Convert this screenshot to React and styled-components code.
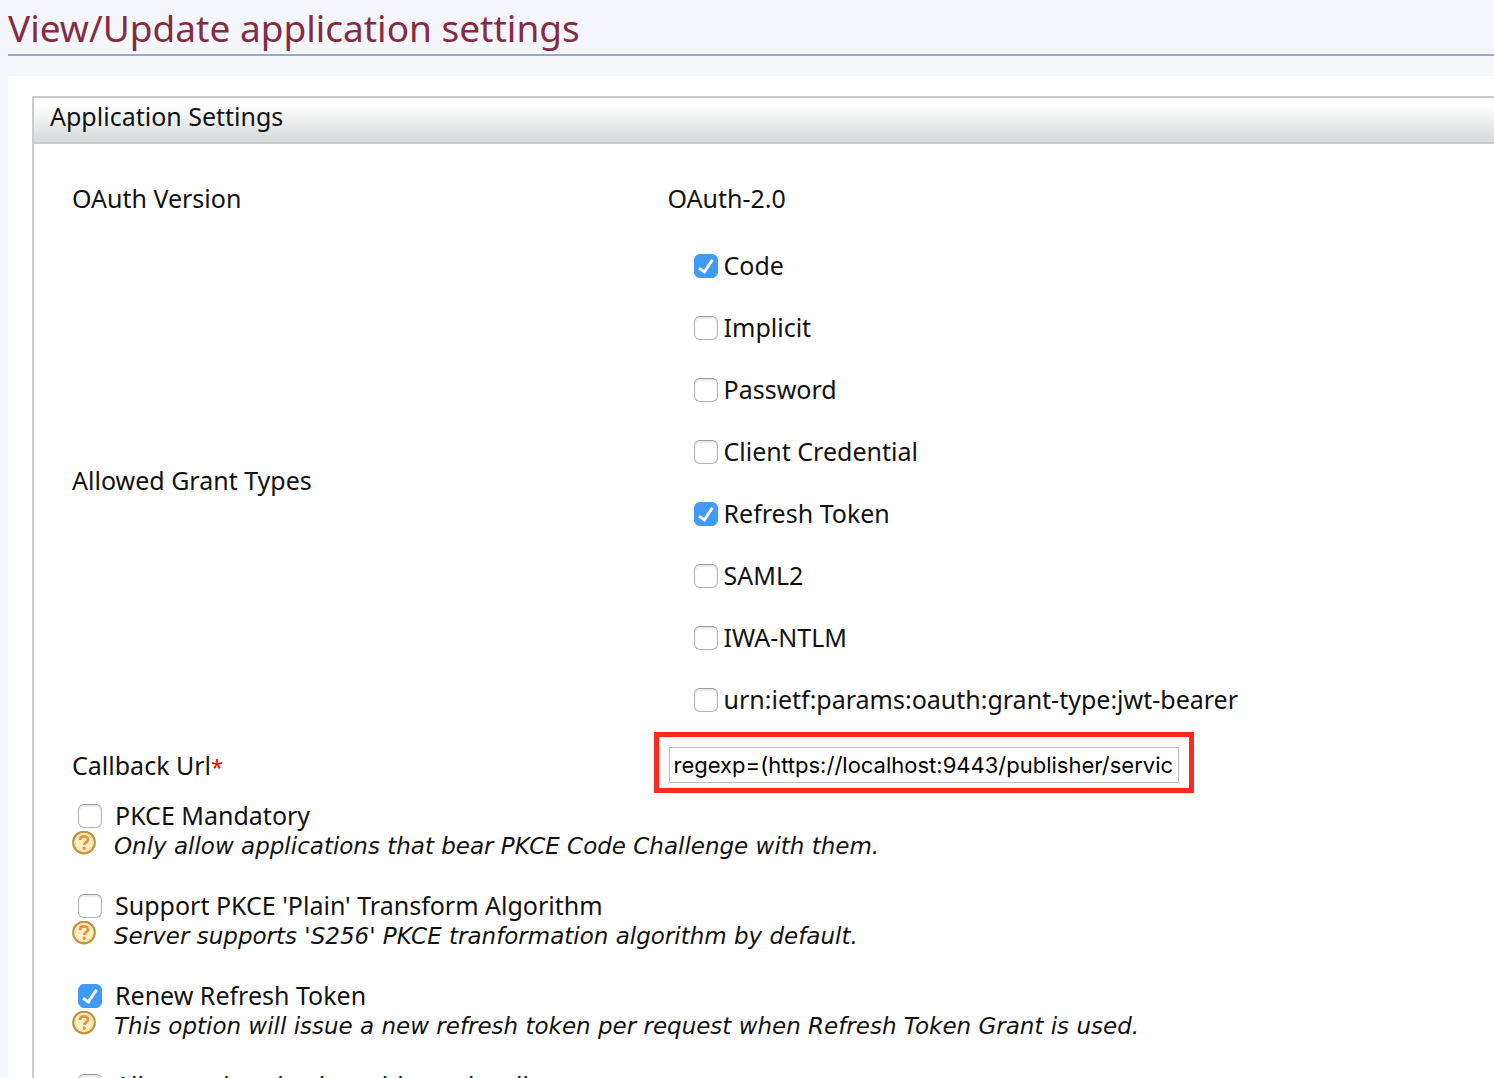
import React, { useId } from 'react';
import styled, { createGlobalStyle } from 'styled-components';

const GlobalStyle = createGlobalStyle`
  *, *::before, *::after { box-sizing: border-box; }
  body {
    margin: 0;
    background: #f4f6fb;
    color: #111;
    font: 25px/30px "Noto Sans", "Open Sans", sans-serif;
  }
  #root { height: 100vh; overflow: hidden; }
`;

const Page = styled.main`
  padding-left: 8px;
`;

const Title = styled.h1`
  margin: 0;
  padding: 5px 0 3px;
  border-bottom: 2px solid #94a9cd;
  color: #852b42;
  font-size: 37px;
  font-weight: 400;
  line-height: 46px;
`;

const WorkArea = styled.section`
  margin-top: 20px;
  padding: 20px 0 0 24px;
  background: #fff;
`;

const Panel = styled.div`
  border: 2px solid #cacbcc;
  border-right: 0;
`;

const PanelHeading = styled.h2`
  margin: 0;
  padding: 3px 16px 11px;
  border-bottom: 2px solid #cacbcc;
  background: linear-gradient(#fff 15%, #f0f3f2 45%, #e1e3e5 75%, #d9dcdd 90%);
  font-size: 25px;
  font-weight: 400;
  line-height: 30px;
`;

const Form = styled.form`
  padding: 29px 4px 30px 38px;
`;

const Fields = styled.div`
  display: grid;
  grid-template-columns: 42% 1fr;
  align-items: center;
`;

const FieldValue = styled.div`
  padding: 10px 0;
`;

const FieldLabel = styled.div`
  padding-top: 4px;
`;

const GrantList = styled.div`
  display: grid;
  row-gap: 34px;
  padding: 28px 0 19px 26px;
`;

const Choice = styled.label`
  display: flex;
  align-items: center;
  gap: ${(p) => p.$gap}px;
  line-height: 28px;
`;

const Tick = styled.input`
  appearance: none;
  flex: none;
  display: grid;
  place-items: center;
  width: 24px;
  height: 24px;
  margin: 2px 0 0;
  border: 1px solid #b2b2b2;
  border-top-color: #999;
  border-radius: 6px;
  background: #fff;
  box-shadow: inset 0 2px 2px #e8e8e8;

  &:checked {
    border-color: #409afa;
    background: #409afa;
    box-shadow: none;
  }

  &:checked::after {
    content: "";
    width: 8px;
    height: 16px;
    margin-bottom: 3px;
    border: solid #fff;
    border-width: 0 3px 3px 0;
    transform: rotate(34deg);
  }
`;

const Required = styled.span`
  color: #f00;
  font-size: 22px;
  line-height: 20px;
`;

const Highlight = styled.div`
  justify-self: start;
  margin-left: -14px;
  padding: 10px 10px 5px;
  border: 5px solid #fc2a1c;
`;

const UrlInput = styled.input`
  display: block;
  width: 510px;
  height: 36px;
  padding: 0 4px;
  border: 1px solid #b9babb;
  border-radius: 0;
  background: #fff;
  color: #000;
  font: 22px/30px Inter, Roboto, sans-serif;
`;

const Options = styled.div`
  display: grid;
  row-gap: 30px;
  padding-top: 8px;
`;

const OptionTop = styled.div`
  padding: 0 0 2px 6px;
`;

const Hint = styled.div`
  display: flex;
  gap: 18px;
  font-family: "DejaVu Sans", sans-serif;
  font-size: 23px;
  font-style: oblique;
`;

const HelpIcon = styled.svg`
  flex: none;
  width: 24px;
  height: 24px;
`;

function Help() {
  return (
    <HelpIcon viewBox="0 0 24 24" aria-hidden="true">
      <circle cx="12" cy="11.5" r="10.8" fill="#fdf0c4" stroke="#bd9444" strokeWidth="2.2" />
      <circle cx="12" cy="11.5" r="8.9" fill="none" stroke="#f7e3a8" strokeWidth="1.4" />
      <path d="M8 8.9C8 4.3 16 4.3 16 8.6C16 11.3 12.2 11.2 12.2 14.1" fill="none" stroke="#e5914c" strokeWidth="2.8" />
      <circle cx="12.2" cy="17.2" r="1.7" fill="#e5914c" />
    </HelpIcon>
  );
}

const grants = [
  ['Code', true],
  ['Implicit', false],
  ['Password', false],
  ['Client Credential', false],
  ['Refresh Token', true],
  ['SAML2', false],
  ['IWA-NTLM', false],
  ['urn:ietf:params:oauth:grant-type:jwt-bearer', false],
];

const options = [
  { label: 'PKCE Mandatory', hint: 'Only allow applications that bear PKCE Code Challenge with them.' },
  { label: "Support PKCE 'Plain' Transform Algorithm", hint: "Server supports 'S256' PKCE tranformation algorithm by default." },
  { label: 'Renew Refresh Token', checked: true, hint: 'This option will issue a new refresh token per request when Refresh Token Grant is used.' },
  { label: 'Allow authentication without the client secret' },
];

function CheckChoice({ label, checked, gap }) {
  const id = useId();
  return (
    <Choice htmlFor={id} $gap={gap}>
      <Tick id={id} type="checkbox" defaultChecked={checked} />
      {label}
    </Choice>
  );
}

export default function App() {
  return (
    <Page>
      <GlobalStyle />
      <Title>View/Update application settings</Title>
      <WorkArea>
        <Panel>
          <PanelHeading>Application Settings</PanelHeading>
          <Form>
            <Fields>
              <div>OAuth Version</div>
              <FieldValue>OAuth-2.0</FieldValue>
              <FieldLabel id="grants">Allowed Grant Types</FieldLabel>
              <GrantList role="group" aria-labelledby="grants">
                {grants.map(([label, checked]) => (
                  <CheckChoice key={label} label={label} checked={checked} gap={6} />
                ))}
              </GrantList>
              <FieldLabel as="label" htmlFor="callback">
                Callback Url<Required>*</Required>
              </FieldLabel>
              <Highlight>
                <UrlInput id="callback" type="text" defaultValue="regexp=(https://localhost:9443/publisher/services)" />
              </Highlight>
            </Fields>
            <Options>
              {options.map((option) => (
                <div key={option.label}>
                  <OptionTop>
                    <CheckChoice label={option.label} checked={option.checked} gap={13} />
                  </OptionTop>
                  {option.hint && (
                    <Hint>
                      <Help />
                      {option.hint}
                    </Hint>
                  )}
                </div>
              ))}
            </Options>
          </Form>
        </Panel>
      </WorkArea>
    </Page>
  );
}
